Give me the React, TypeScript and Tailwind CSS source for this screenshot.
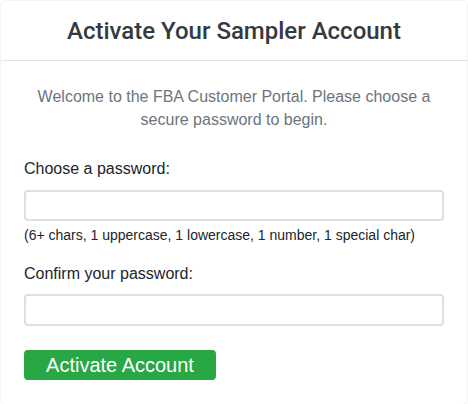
export default function App() {
  return (
    <main className="min-h-[404px] w-full bg-white font-['Liberation_Sans',Arial,sans-serif]">
      <div className="rounded-md border border-[#f4f4f4]">
        <div className="flex h-[60px] items-center justify-center border-b border-[#e2e2e2]">
          <h1 className="font-['Roboto',sans-serif] text-[24px] font-medium text-[#343a40]">
            Activate Your Sampler Account
          </h1>
        </div>
        <div className="px-[23px] pt-[24px] pb-6">
          <p className="px-2 text-center text-[16px] leading-[23px] text-[#6c757d]">
            Welcome to the FBA Customer Portal. Please choose a secure password to begin.
          </p>
          <form className="mt-[28px]" onSubmit={(e) => e.preventDefault()}>
            <label className="block text-[16px] leading-5 text-[#212529]">Choose a password:</label>
            <input
              type="password"
              className="mt-[11px] block h-[31px] w-full rounded border-2 border-[#dde0e3] bg-white outline-none"
            />
            <p className="mt-[6px] text-[14px] leading-4 text-[#212529]">
              (6+ chars, 1 uppercase, 1 lowercase, 1 number, 1 special char)
            </p>
            <label className="mt-[21px] block text-[16px] leading-5 text-[#212529]">
              Confirm your password:
            </label>
            <input
              type="password"
              className="mt-[10px] block h-[32px] w-full rounded border-2 border-[#dde0e3] bg-white outline-none"
            />
            <button
              type="submit"
              className="mt-[24px] h-[30px] w-[192px] rounded bg-[#28a745] text-[20px] leading-none text-white"
            >
              Activate Account
            </button>
          </form>
        </div>
      </div>
    </main>
  );
}
